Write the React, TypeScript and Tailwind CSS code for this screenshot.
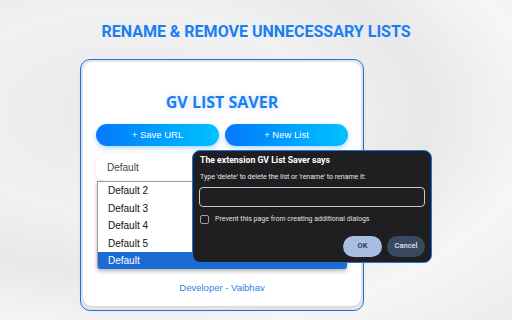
import React from "react";

const items = ["Default 2", "Default 3", "Default 4", "Default 5"];

const App = () => {
  return (
    <div className="relative w-[512px] h-[320px] overflow-hidden bg-[radial-gradient(ellipse_at_25%_35%,#e9e9e9_0%,#f1f1f1_35%,#e8e8e8_55%,#f6f6f6_75%,#ececec_100%)] font-['Liberation_Sans',Arial,sans-serif]">
      <h1 className="pt-[22px] text-center text-[16px] leading-[20px] font-bold text-[#1a7ef5] font-['Roboto',sans-serif]">
        RENAME &amp; REMOVE UNNECESSARY LISTS
      </h1>

      <div className="ml-[80px] mt-[17px] w-[284px] h-[252px] rounded-[10px] border border-[#1a73e8] bg-[#eeeeee] px-[2px] pt-[2px] pb-[4px]">
        <div className="h-full rounded-[9px] bg-white px-[13px] shadow-[0_1px_6px_rgba(0,0,0,0.14)]">
          <h2 className="pt-[29px] text-center text-[16px] leading-[22px] font-bold text-[#1a7ef5] font-['Open_Sans',sans-serif] [text-shadow:0_0_6px_rgba(26,126,245,0.25)]">
            GV LIST SAVER
          </h2>

          <div className="mt-[11px] flex gap-[6px]">
            <button className="h-[22px] flex-1 rounded-full bg-gradient-to-r from-[#0a78fb] to-[#00c2ff] text-[9.5px] text-white shadow-[0_2px_5px_rgba(0,140,255,0.35)]">
              + Save URL
            </button>
            <button className="h-[22px] flex-1 rounded-full bg-gradient-to-r from-[#0a78fb] to-[#00c2ff] text-[9.5px] text-white shadow-[0_2px_5px_rgba(0,140,255,0.35)]">
              + New List
            </button>
          </div>

          <div className="relative mt-[8px]">
            <div className="flex h-[27px] items-center rounded-[9px] bg-white pl-[11px] text-[10px] text-[#444] shadow-[0_1px_5px_rgba(0,0,0,0.12)]">
              Default
            </div>
            <ul className="absolute left-[1px] right-[1px] top-full z-10 overflow-hidden rounded-b-[3px] border-l border-t border-[#9a9a9a] bg-white text-[10px] text-[#111] shadow-[0_2px_4px_rgba(0,0,0,0.3)]">
              {items.map((item) => (
                <li key={item} className="flex h-[17.5px] items-center pl-[10px]">
                  {item}
                </li>
              ))}
              <li className="flex h-[17px] items-center bg-[#1a6cd4] pl-[10px] text-white">Default</li>
            </ul>
          </div>

          <p className="mt-[101px] text-center text-[9.5px] leading-[12px] text-[#2f7fe4]">Developer - Vaibhav</p>
        </div>
      </div>

      <div className="absolute left-[192px] top-[150px] z-20 flex w-[240px] h-[113px] flex-col rounded-[8px] border-[1.5px] border-[#1a73e8] bg-[#1f1f21] px-[6px] font-['Roboto',sans-serif]">
        <div className="pt-[4px] pl-[1px] text-[8.7px] leading-[11px] font-bold text-white">The extension GV List Saver says</div>
        <div className="mt-[7px] pl-[1px] text-[7px] leading-[9px] text-[#e8e8e8]">
          Type 'delete' to delete the list or 'rename' to rename it:
        </div>
        <div className="mt-[5px] h-[19.5px] rounded-[4px] border-[1.5px] border-[#c5c9d2]" />
        <div className="mt-[8px] flex items-center gap-[6px] pl-[1px]">
          <span className="h-[9px] w-[9px] rounded-[2px] border-[1.5px] border-[#9aa0a6]" />
          <span className="text-[7px] leading-[9px] text-[#e0e0e0]">Prevent this page from creating additional dialogs</span>
        </div>
        <div className="mt-[12px] flex justify-end gap-[5px]">
          <button className="h-[21px] w-[39px] rounded-full bg-[#a9bee3] text-[7.5px] font-medium text-[#1b2a44]">OK</button>
          <button className="h-[21px] w-[38px] rounded-full bg-[#3a4860] text-[7.5px] font-medium text-[#dfe6f2]">Cancel</button>
        </div>
      </div>
    </div>
  );
};

export default App;
